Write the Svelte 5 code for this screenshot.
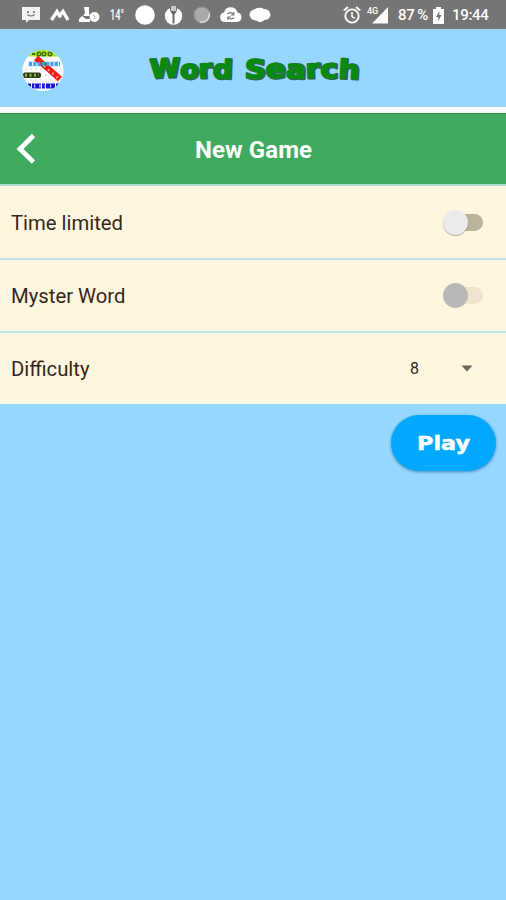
<script>
  let timeLimited = false;
  let mysterWord = false;
  let difficulty = 8;
</script>

<main class="app">
  <div class="status">
    <div class="notifications">
      <svg width="18" height="18" viewBox="0 0 18 18">
        <path d="M0 1h18v13H7l-3 3v-3H0z" fill="#f4f4f4" />
        <circle cx="6" cy="6" r="1" fill="#666" />
        <circle cx="12" cy="6" r="1" fill="#666" />
        <path d="M5.500 8.500q3.500 3 7 0" fill="none" stroke="#777" stroke-width="1.2" />
      </svg>
      <svg class="m" width="20" height="18" viewBox="0 0 20 18">
        <path d="M1.500 14L7 5.500l3.500 6M10 9l3-3.500L18 14" fill="none" stroke="#fff" stroke-width="3.400" />
      </svg>
      <svg class="person" width="21" height="18" viewBox="0 0 21 18">
        <path d="M5 1h5v6l1 3h-7l2-3z" fill="#fff" />
        <path d="M0 16v-3l3-3 4 3h4v3z" fill="#fff" />
        <circle cx="15.500" cy="11" r="5" fill="#fff" />
        <path d="M14.500 8.500l1.500 2.500-1 2" fill="none" stroke="#aaa" />
      </svg>
      <svg class="temp" width="17" height="22" viewBox="0 0 17 22">
        <text x="1" y="16" textLength="14" lengthAdjust="spacingAndGlyphs">14°</text>
      </svg>
      <svg class="dot" width="20" height="20" viewBox="0 0 20 20">
        <circle cx="10" cy="10" r="9.800" fill="#fff" />
      </svg>
      <svg class="fork" width="19" height="20" viewBox="0 0 19 20">
        <circle cx="9.500" cy="11" r="8.700" fill="#fff" />
        <path d="M5.500 1.500l1 5 2 3v9h2v-9l2-3 1-5z" fill="#686868" />
        <path d="M7 1h5v5H7z" fill="#c8c8c8" />
      </svg>
      <svg class="grey" width="18" height="18" viewBox="0 0 18 18">
        <circle cx="9" cy="9" r="8" fill="#a9a9a9" stroke="#929292" />
        <path d="M16 7a7.500 7.500 0 0 1-9 9" fill="none" stroke="#dedede" stroke-width="1.500" />
      </svg>
      <svg class="cloud" width="22" height="18" viewBox="0 0 22 18">
        <path d="M5 16a4.800 4.800 0 0 1-1-9.500 7 7 0 0 1 13.500 0A4.800 4.800 0 0 1 17 16z" fill="#fff" />
        <path d="M7.500 8q3.500-3 6 .5M14 11.500q-3.500 3-6-.5M13.800 6v3h-3M7.800 14v-3h3" fill="none" stroke="#777" stroke-width="1.200" />
      </svg>
      <svg class="cloud2" width="22" height="18" viewBox="0 0 22 18">
        <path d="M4 4q2-1 4-2 4-1 7 1 6 0 6.500 6-1 5-6 5-4 4-8 .5-6 0-7-5.500 0-4 3.500-5" fill="#fff" />
      </svg>
    </div>
    <div class="system">
      <svg width="18" height="18" viewBox="0 0 18 18" fill="none" stroke="#fff">
        <circle cx="9" cy="10" r="6.700" stroke-width="1.800" />
        <path d="M9 6v4.500l3 2" stroke-width="1.500" />
        <path d="M.8 4.500L5 1M17.200 4.500L13 1" stroke-width="2" />
      </svg>
      <span class="net">4G</span>
      <svg class="signal" width="16" height="17" viewBox="0 0 16 17">
        <path d="M0 16.500L16 0v16.500z" fill="#fff" />
      </svg>
      <span class="percent">87 %</span>
      <svg class="battery" width="11" height="17" viewBox="0 0 11 17">
        <path d="M0 2h3V0h5v2h3v15H0z" fill="#fff" />
        <path d="M6.500 4L3 10h2.200v4L8.500 8H6.200z" fill="#707070" />
      </svg>
      <span class="clock">19:44</span>
    </div>
  </div>

  <header>
    <svg class="logo" width="42" height="44" viewBox="0 0 42 44">
      <defs>
        <clipPath id="disc"><circle cx="21" cy="21.500" r="20.500" /></clipPath>
      </defs>
      <g clip-path="url(#disc)">
        <rect width="42" height="44" fill="#fff" />
        <g stroke="#cfcfdc" stroke-dasharray="2 3">
          <path d="M3 20h36M3 31h36M5 33h32M23 26h16" />
        </g>
        <rect width="42" height="7.500" fill="#a5e31c" />
        <path d="M10 5h3" stroke="#476c00" stroke-width="2" />
        <g fill="none" stroke="#466b00" stroke-width="1.400">
          <circle cx="17" cy="5" r="1.800" /><circle cx="22" cy="5" r="1.800" /><circle cx="28" cy="5" r="1.800" />
        </g>
        <path d="M6 15h32" stroke="#d4edff" stroke-width="6" />
        <path d="M14 9L38 30" stroke="#fb1712" stroke-width="6" />
        <path d="M22 17L37 30" stroke="#ffb4ae" stroke-width="2.200" stroke-dasharray="1.500 4" />
        <path d="M7 15h31" stroke="#4a9cf0" stroke-width="4" stroke-dasharray="3 1.300" />
        <rect x="1" y="23.500" width="18" height="5.500" rx="2" fill="#2b3a10" />
        <path d="M3 26.200h14" stroke="#92b64a" stroke-width="3" stroke-dasharray="2 2.500" />
        <path d="M6 37h31" stroke="#1414d4" stroke-width="5" stroke-dasharray="3 1 9 1" />
        <path d="M12 37h20" stroke="#c4c4ff" stroke-width="3" stroke-dasharray="1.300 4" />
      </g>
    </svg>
    <svg class="title" width="220" height="40" viewBox="0 0 220 40">
      <g class="shade">
        <text x="5" y="27.500" textLength="82" lengthAdjust="spacingAndGlyphs" rotate="-3 2 -2 2">Word</text>
        <text x="99" y="27.500" textLength="115" lengthAdjust="spacingAndGlyphs" rotate="2 -2 2 -2 -1 3">Search</text>
      </g>
      <g class="face">
        <text x="4" y="27" textLength="82" lengthAdjust="spacingAndGlyphs" rotate="-3 2 -2 2">Word</text>
        <text x="98" y="27" textLength="115" lengthAdjust="spacingAndGlyphs" rotate="2 -2 2 -2 -1 3">Search</text>
      </g>
    </svg>
  </header>

  <nav>
    <button class="back" aria-label="Back">
      <svg width="22" height="32" viewBox="0 0 22 32">
        <path d="M18.500 2.500L5 16l13.500 13" fill="none" stroke="#fff" stroke-width="4.800" />
      </svg>
    </button>
    <h1>New Game</h1>
  </nav>

  <section>
    <label class="row">
      <span>Time limited</span>
      <input type="checkbox" bind:checked={timeLimited} />
      <span class="switch" class:on={timeLimited}><i></i></span>
    </label>
    <label class="row">
      <span>Myster Word</span>
      <input type="checkbox" bind:checked={mysterWord} disabled />
      <span class="switch disabled" class:on={mysterWord}><i></i></span>
    </label>
    <div class="row">
      <span>Difficulty</span>
      <div class="picker">
        <span>{difficulty}</span>
        <svg width="12" height="7" viewBox="0 0 12 7">
          <path d="M.5.500h11L6 6.500z" fill="#6b665c" />
        </svg>
      </div>
    </div>
  </section>

  <button class="play" aria-label="Play">
    <svg width="58" height="32" viewBox="0 0 58 32">
      <text x="2" y="22" textLength="53" lengthAdjust="spacingAndGlyphs">Play</text>
    </svg>
  </button>
</main>

<style>
  :global(body) {
    background: #95d7ff;
  }

  .app {
    display: flex;
    flex-direction: column;
    min-height: 900px;
    background: #95d7ff;
    font-family: Roboto, sans-serif;
  }

  .status {
    display: flex;
    justify-content: space-between;
    height: 29px;
    box-sizing: border-box;
    padding: 0 18px 0 22px;
    background: #757575;
    color: #fff;
  }

  .notifications,
  .system {
    display: flex;
    align-items: center;
    height: 30px;
  }

  svg {
    display: block;
    flex: none;
  }

  .m {
    margin-left: 10px;
  }

  .person {
    margin-left: 9px;
  }

  .temp {
    margin-left: 9px;
    overflow: visible;
  }

  .temp text {
    fill: #fff;
    font-family: Roboto, sans-serif;
    font-size: 15px;
    font-weight: 500;
  }

  .dot {
    margin-left: 9px;
  }

  .grey {
    margin-left: 10px;
  }

  .fork {
    margin-left: 9px;
  }

  .cloud {
    margin-left: 9px;
  }

  .cloud2 {
    margin-left: 7px;
  }

  .net {
    width: 11px;
    margin: 0 -6px 9px 6px;
    font-size: 9px;
    font-weight: 500;
  }

  .percent {
    width: 31px;
    margin-left: 10px;
    font-size: 15px;
    font-weight: 500;
    white-space: nowrap;
    word-spacing: -1px;
    letter-spacing: -0.2px;
  }

  .battery {
    margin: 0 8px 0 4px;
  }

  .clock {
    width: 36px;
    font-size: 15px;
    font-weight: 500;
    letter-spacing: -0.3px;
  }

  header {
    display: flex;
    align-items: center;
    height: 78px;
    padding: 0 22px;
    border-bottom: 6px solid #fff;
  }

  .logo {
    margin-top: 6px;
  }

  .title {
    margin: 5px 0 0 82px;
  }

  text {
    font-family: "DejaVu Sans", sans-serif;
    font-weight: bold;
  }

  .title text {
    font-size: 26px;
    stroke-linejoin: round;
  }

  .shade text {
    fill: #33605c;
    stroke: #33605c;
    stroke-width: 2.4px;
  }

  .face text {
    fill: #0b8a10;
    stroke: #0b8a10;
    stroke-width: 1.2px;
  }

  nav {
    display: grid;
    grid-template-columns: 50px 1fr 50px;
    align-items: center;
    height: 70px;
    background: #40aa5f;
    border-top: 1px solid #259343;
    border-bottom: 2px solid #a9dcd5;
  }

  button {
    border: none;
    cursor: pointer;
  }

  .back {
    padding: 0 0 0 15px;
    background: none;
  }

  h1 {
    margin: 2px 0 0 1px;
    color: #fff;
    font-size: 24px;
    font-weight: 700;
    line-height: 30px;
    letter-spacing: 0.1px;
    text-align: center;
  }

  .row {
    display: flex;
    align-items: center;
    justify-content: space-between;
    height: 71px;
    padding: 1px 23px 0 11px;
    background: #fff6df;
    border-bottom: 2px solid #bde3e6;
    color: #35261c;
    font-size: 20.3px;
  }

  .row + .row {
    padding-top: 0;
  }

  .row:last-child {
    border-bottom: none;
  }

  input {
    display: none;
  }

  .switch {
    display: flex;
    align-items: center;
    width: 34px;
    height: 17px;
    border-radius: 9px;
    background: #b8b399;
  }

  .switch i {
    width: 25px;
    height: 25px;
    flex: none;
    margin-left: -6px;
    border-radius: 50%;
    background: #ececec;
    box-shadow: 0 1px 1px rgba(0, 0, 0, 0.3);
  }

  .switch.on i {
    margin-left: 15px;
  }

  .switch.disabled {
    background: #eee5cc;
  }

  .switch.disabled i {
    background: #b8b8b8;
    box-shadow: none;
  }

  .picker {
    display: flex;
    align-items: center;
    justify-content: space-between;
    width: 63px;
    padding-right: 10px;
    font-size: 16px;
  }

  .play {
    display: flex;
    align-items: center;
    justify-content: center;
    align-self: flex-end;
    width: 105px;
    height: 56px;
    margin: 11px 10px 0;
    padding: 2px 0 0;
    border-radius: 28px;
    background: #03a9ff;
    box-shadow: 0 1px 3px rgba(0, 60, 100, 0.5);
  }

  .play text {
    font-size: 20px;
    fill: #fff;
    stroke: #fff;
    stroke-width: 0.5px;
  }
</style>
